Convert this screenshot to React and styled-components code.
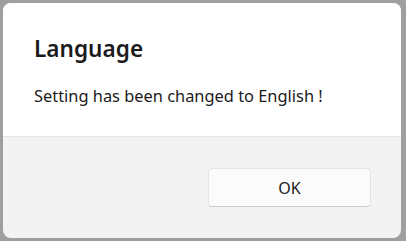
import styled, { createGlobalStyle } from "styled-components";

const GlobalStyle = createGlobalStyle`
    html, body {
        margin: 0;
        padding: 0;
        background: #9f9f9f;
    }
    body {
        font-family: "Noto Sans", "Open Sans", sans-serif;
    }
`;

const Page = styled.div`
    width: 406px;
    height: 241px;
    padding: 3px 5px 3px 3px;
    box-sizing: border-box;
`;

const Dialog = styled.div`
    display: flex;
    flex-direction: column;
    height: 100%;
    border-radius: 8px;
    overflow: hidden;
    background: #f3f3f3;
`;

const Content = styled.div`
    background: #ffffff;
    padding: 32px 31px 0;
    height: 134px;
    box-sizing: border-box;
    border-bottom: 1px solid #e5e5e5;
`;

const Title = styled.h1`
    margin: 0;
    font-size: 22.6px;
    font-weight: 600;
    line-height: 28px;
    color: #1b1b1b;
`;

const Message = styled.p`
    margin: 22px 0 0;
    font-size: 16.4px;
    line-height: 22px;
    color: #1b1b1b;
`;

const Footer = styled.div`
    flex: 1;
    display: flex;
    justify-content: flex-end;
    align-items: flex-start;
    padding: 31px 30px 0;
`;

const Button = styled.button`
    width: 163px;
    height: 39px;
    border: 1px solid #e5e5e5;
    border-bottom-color: #cccccc;
    border-radius: 4px;
    background: #fbfbfb;
    font-family: inherit;
    font-size: 16px;
    color: #1b1b1b;
`;

const App = () => {
    return (
        <Page>
            <GlobalStyle />
            <Dialog>
                <Content>
                    <Title>Language</Title>
                    <Message>Setting has been changed to English !</Message>
                </Content>
                <Footer>
                    <Button type="button">OK</Button>
                </Footer>
            </Dialog>
        </Page>
    );
};

export default App;
